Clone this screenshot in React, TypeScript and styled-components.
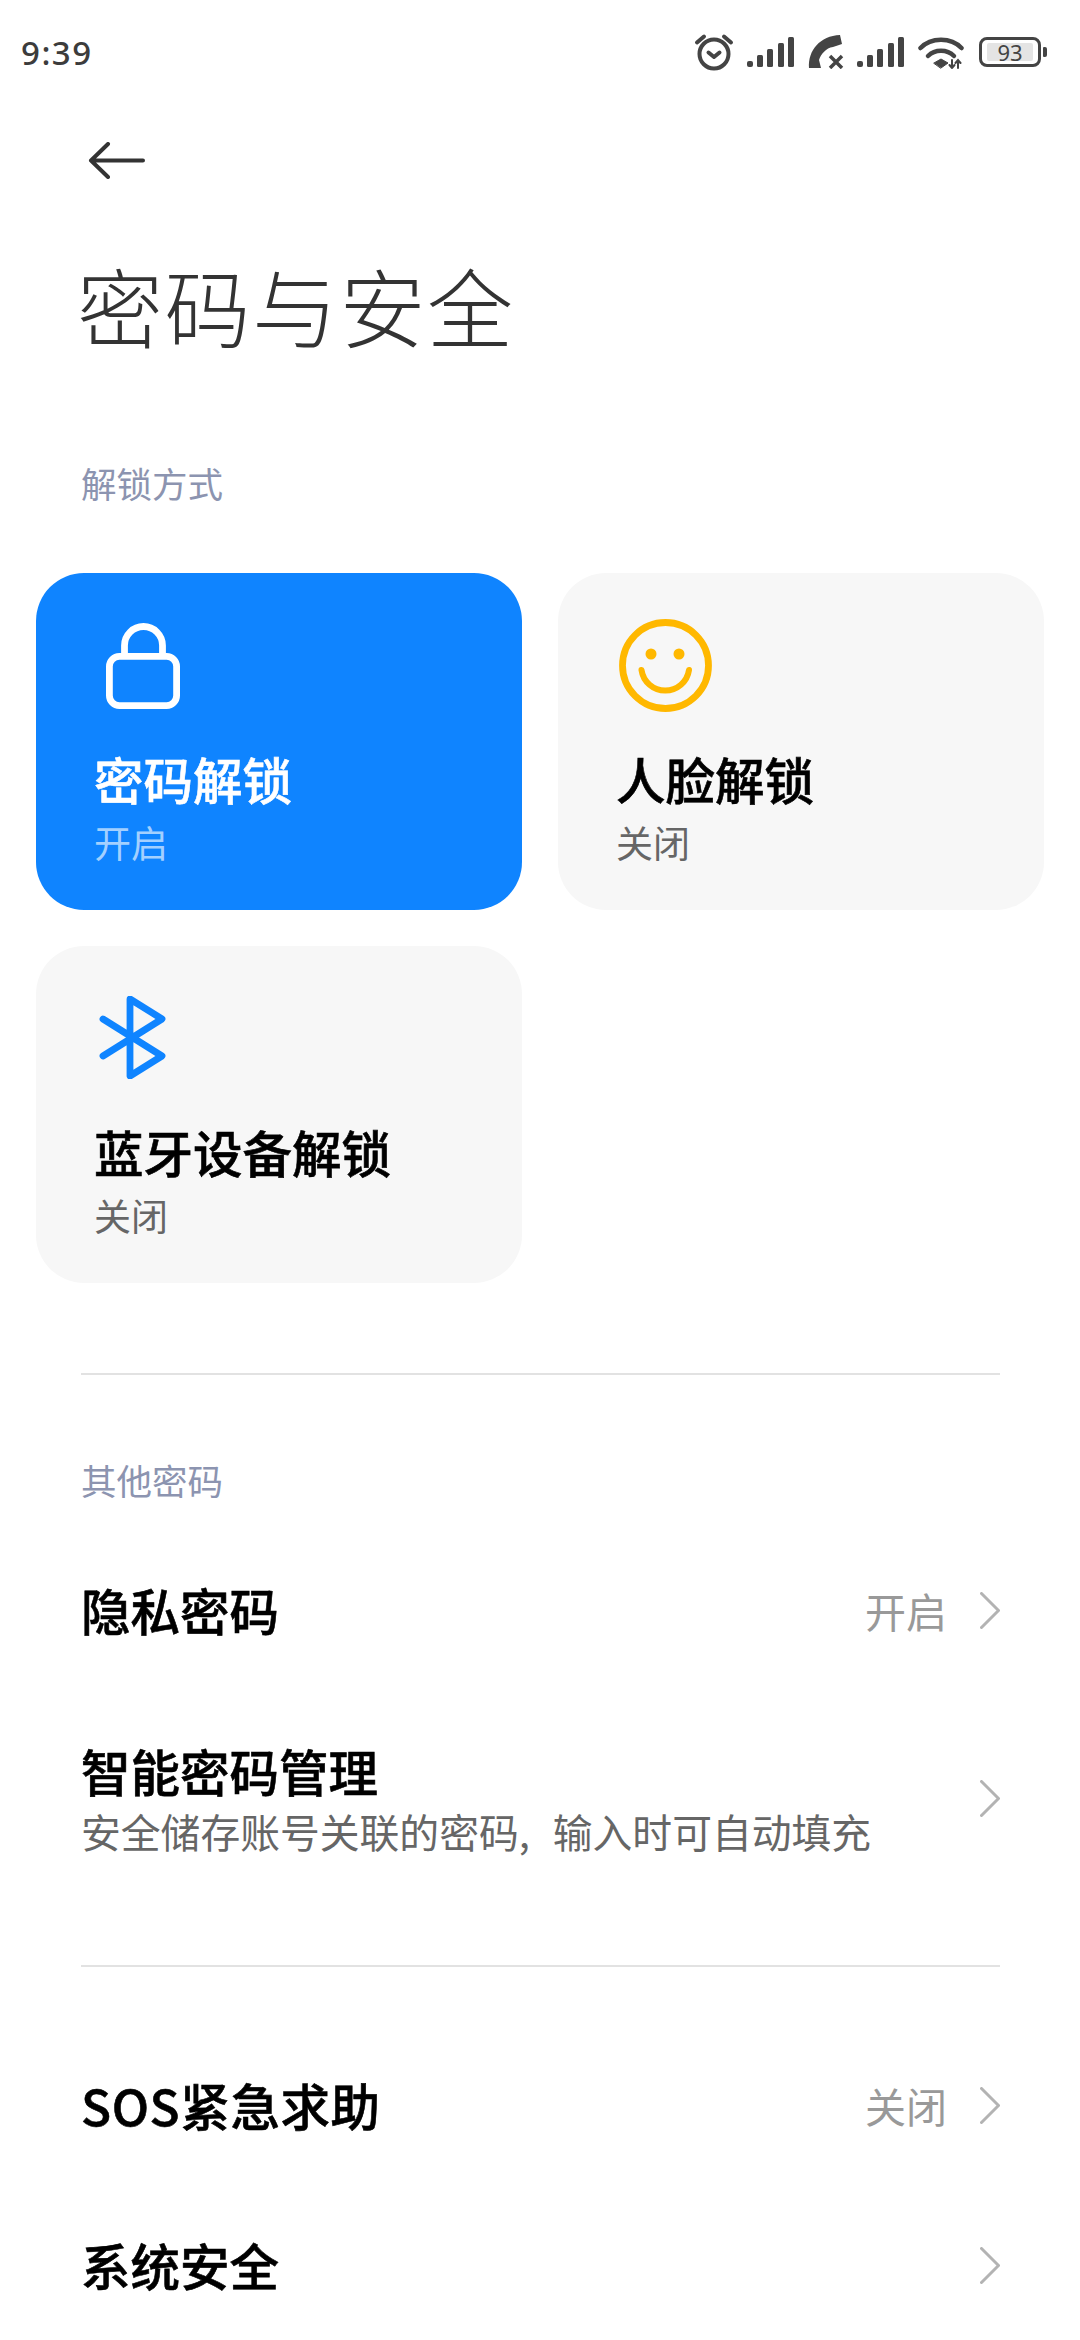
import React from 'react';
import styled, { createGlobalStyle } from 'styled-components';

const Global = createGlobalStyle`
  html, body { margin: 0; padding: 0; background: #fff; }
  body { font-family: "Noto Sans CJK SC", "Noto Sans", sans-serif; }
  * { box-sizing: border-box; }
`;

const Page = styled.div`
  width: 1080px;
  height: 2340px;
  overflow: hidden;
  background: #fff;
`;

const StatusBar = styled.div`
  height: 106px;
  padding: 33px 33px 0 21px;
  display: flex;
  justify-content: space-between;
  align-items: flex-start;
`;

const Time = styled.div`
  font-family: "Noto Sans", sans-serif;
  font-size: 33px;
  line-height: 40px;
  font-weight: 500;
  letter-spacing: 1.5px;
  color: #3c3c3c;
`;

const StatusIcons = styled.div`
  display: flex;
  align-items: center;
  height: 38px;
  gap: 13px;
  color: #444;
`;

const Battery = styled.div`
  display: flex;
  align-items: center;
  margin-left: 2px;
  gap: 2px;
`;

const BatteryBody = styled.div`
  width: 62px;
  height: 30px;
  border: 3.5px solid #444;
  border-radius: 8px;
  padding: 2.5px 5px;
`;

const BatteryFill = styled.div`
  height: 18px;
  background: #e4e4e4;
  border-radius: 2px;
  font-family: "Noto Sans", sans-serif;
  font-size: 22px;
  line-height: 18px;
  text-align: center;
  color: #444;
`;

const BatteryNub = styled.div`
  width: 4px;
  height: 10px;
  background: #444;
  border-radius: 1px 2px 2px 1px;
`;

const BackRow = styled.div`
  height: 108px;
  padding-left: 88px;
  display: flex;
  align-items: center;
`;

const Title = styled.h1`
  margin: 41px 0 0;
  padding-left: 77px;
  font-size: 86px;
  line-height: 100px;
  letter-spacing: 1.5px;
  font-weight: 300;
  color: #333;
`;

const SectionLabel = styled.div<{ $top: number }>`
  margin-top: ${p => p.$top}px;
  padding-left: 81px;
  font-size: 35.5px;
  line-height: 50px;
  color: #8c94b0;
`;

const CardGrid = styled.div`
  margin-top: 65px;
  padding: 0 36px;
  display: grid;
  grid-template-columns: 486px 486px;
  grid-auto-rows: 337px;
  gap: 36px;
`;

const Card = styled.div<{ $active?: boolean }>`
  background: ${p => (p.$active ? '#0f84ff' : '#f7f7f7')};
  border-radius: 48px;
  padding-left: 58px;
`;

const IconSlot = styled.div<{ $left: number; $top: number }>`
  height: 180px;
  padding: ${p => p.$top}px 0 0 ${p => p.$left}px;
  svg { display: block; }
`;

const CardTitle = styled.div<{ $active?: boolean }>`
  font-size: 49.5px;
  line-height: 52px;
  font-weight: 500;
  -webkit-text-stroke: 0.6px currentColor;
  color: ${p => (p.$active ? '#fff' : '#000')};
`;

const CardSub = styled.div<{ $active?: boolean }>`
  margin-top: 15px;
  font-size: 37px;
  line-height: 44px;
  color: ${p => (p.$active ? '#a3d0ff' : '#666')};
`;

const Divider = styled.div<{ $top: number }>`
  margin: ${p => p.$top}px 80px 0 81px;
  height: 2px;
  background: #e2e2e2;
`;

const Row = styled.div<{ $height: number; $top?: number }>`
  height: ${p => p.$height}px;
  margin-top: ${p => p.$top ?? 0}px;
  padding: 0 80px 0 81px;
  display: flex;
  align-items: center;
`;

const RowText = styled.div<{ $shift?: number }>`
  flex: 1;
  min-width: 0;
  padding-top: ${p => p.$shift ?? 0}px;
`;

const RowTitle = styled.div<{ $tracking?: number }>`
  font-size: 49.5px;
  line-height: 60px;
  font-weight: 500;
  -webkit-text-stroke: 0.6px currentColor;
  letter-spacing: ${p => p.$tracking ?? 0}px;
  color: #000;
`;

const RowSub = styled.div`
  font-size: 39.8px;
  line-height: 60px;
  word-spacing: 14px;
  color: #666;
`;

const RowValue = styled.div`
  margin-right: 33px;
  font-size: 41px;
  line-height: 50px;
  color: #999;
`;

const Chevron = () => (
  <svg width="20" height="37" viewBox="0 0 20 37" fill="none" stroke="#b3b3b3" strokeWidth="3" strokeLinecap="round" strokeLinejoin="round">
    <path d="M1.5 1.5 L18.5 18.5 L1.5 35.5" />
  </svg>
);

const BackArrow = () => (
  <svg width="57" height="37" viewBox="0 0 57 37" fill="none" stroke="#333" strokeWidth="4" strokeLinecap="round" strokeLinejoin="round">
    <path d="M55 18.5H3M20 2L3 18.5L20 35" />
  </svg>
);

const Alarm = () => (
  <svg width="40" height="38" viewBox="0 0 40 38" fill="none" stroke="#444" strokeWidth="4" strokeLinecap="round" strokeLinejoin="round">
    <circle cx="20" cy="21" r="14.5" />
    <path d="M3 9.500L10 3.500M37 9.500L30 3.500" />
    <path d="M14.500 19.500L20 24L25.500 19.500" />
  </svg>
);

const Signal = () => (
  <svg width="48" height="30" viewBox="0 0 48 30" fill="#444">
    <rect x="0" y="24" width="6" height="6" rx="2" />
    <rect x="10" y="18" width="6" height="12" rx="1.500" />
    <rect x="20" y="12" width="6" height="18" rx="1.500" />
    <rect x="31" y="6" width="6" height="24" rx="1.500" />
    <rect x="41" y="0" width="6" height="30" rx="1.500" />
  </svg>
);

const Phone = () => (
  <svg width="36" height="34" viewBox="0 0 36 34" fill="#444">
    <path d="M1 33C0 15 12 1 32 0L34 9L25 12C18 13 13 19 11 25L13 33Z" />
    <path d="M22 21L34 33M34 21L22 33" stroke="#444" strokeWidth="3.500" fill="none" />
  </svg>
);

const Wifi = () => (
  <svg width="46" height="33" viewBox="0 0 46 33" fill="none" stroke="#444" strokeWidth="4.500" strokeLinecap="round">
    <path d="M2.500 12C13 1 33 1 43.500 12" />
    <path d="M10 20C17 13 29 13 36 20" />
    <path d="M16 27L23 23L30 27L23 32Z" fill="#444" strokeWidth="1" strokeLinejoin="round" />
    <path d="M34 24V32M31.500 29L34 32L36.500 29M40 32V24M37.500 27L40 24L42.500 27" strokeWidth="2" />
  </svg>
);

const Lock = () => (
  <svg width="74" height="86" viewBox="0 0 74 86" fill="none" stroke="#fff" strokeWidth="6.800" strokeLinejoin="round">
    <rect x="3.400" y="33.400" width="67.200" height="49.200" rx="10" />
    <path d="M18.500 32V22.500a19 19 0 0 1 38 0V32" />
  </svg>
);

const Smile = () => (
  <svg width="93" height="93" viewBox="0 0 93 93" fill="none" stroke="#ffb800">
    <circle cx="46.500" cy="46.500" r="43" strokeWidth="6.800" />
    <circle cx="32" cy="35" r="5.500" fill="#ffb800" stroke="none" />
    <circle cx="60" cy="35" r="5.500" fill="#ffb800" stroke="none" />
    <path d="M22.500 51A24 24 0 0 0 70 51" strokeWidth="6" strokeLinecap="round" />
  </svg>
);

const Bluetooth = () => (
  <svg width="67" height="83" viewBox="0 0 67 83" fill="none" stroke="#0f84ff" strokeWidth="6.800" strokeLinecap="round" strokeLinejoin="round">
    <path d="M4 23L63 60L31 80V3L63 23L4 60" />
  </svg>
);

export default function App() {
  return (
    <Page>
      <Global />
      <StatusBar>
        <Time>9:39</Time>
        <StatusIcons>
          <Alarm />
          <Signal />
          <Phone />
          <Signal />
          <Wifi />
          <Battery>
            <BatteryBody>
              <BatteryFill>93</BatteryFill>
            </BatteryBody>
            <BatteryNub />
          </Battery>
        </StatusIcons>
      </StatusBar>
      <BackRow>
        <BackArrow />
      </BackRow>
      <Title>密码与安全</Title>
      <SectionLabel $top={103}>解锁方式</SectionLabel>
      <CardGrid>
        <Card $active>
          <IconSlot $left={12} $top={50}>
            <Lock />
          </IconSlot>
          <CardTitle $active>密码解锁</CardTitle>
          <CardSub $active>开启</CardSub>
        </Card>
        <Card>
          <IconSlot $left={3} $top={46}>
            <Smile />
          </IconSlot>
          <CardTitle>人脸解锁</CardTitle>
          <CardSub>关闭</CardSub>
        </Card>
        <Card>
          <IconSlot $left={5} $top={50}>
            <Bluetooth />
          </IconSlot>
          <CardTitle>蓝牙设备解锁</CardTitle>
          <CardSub>关闭</CardSub>
        </Card>
      </CardGrid>
      <Divider $top={90} />
      <SectionLabel $top={80}>其他密码</SectionLabel>
      <Row $height={160} $top={25}>
        <RowText>
          <RowTitle>隐私密码</RowTitle>
        </RowText>
        <RowValue>开启</RowValue>
        <Chevron />
      </Row>
      <Row $height={216}>
        <RowText $shift={6}>
          <RowTitle>智能密码管理</RowTitle>
          <RowSub>安全储存账号关联的密码, 输入时可自动填充</RowSub>
        </RowText>
        <Chevron />
      </Row>
      <Divider $top={59} />
      <Row $height={160} $top={58}>
        <RowText>
          <RowTitle $tracking={0.6}>SOS紧急求助</RowTitle>
        </RowText>
        <RowValue>关闭</RowValue>
        <Chevron />
      </Row>
      <Row $height={160}>
        <RowText>
          <RowTitle>系统安全</RowTitle>
        </RowText>
        <Chevron />
      </Row>
    </Page>
  );
}
